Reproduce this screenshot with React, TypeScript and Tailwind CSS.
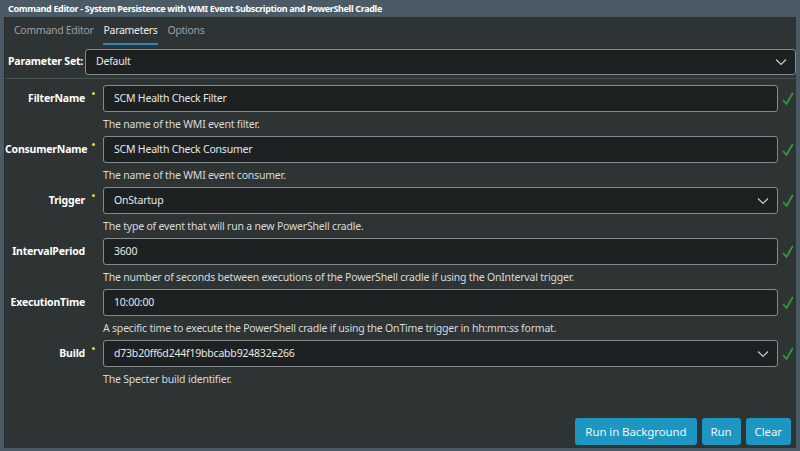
import React from "react";

const font = { fontFamily: '"Noto Sans", "Open Sans", sans-serif' };

function Check() {
  return (
    <svg width="12" height="14" viewBox="0 0 12 14" className="shrink-0">
      <path d="M1.5 8.5 L4.5 12 L10.5 1.5" fill="none" stroke="#2f9a3b" strokeWidth="1.8" strokeLinecap="round" strokeLinejoin="round" />
    </svg>
  );
}

function Chevron() {
  return (
    <svg width="12" height="8" viewBox="0 0 12 8">
      <path d="M1 1.5 L6 6.5 L11 1.5" fill="none" stroke="#c8cbcc" strokeWidth="1.2" />
    </svg>
  );
}

type Row = { label: string; req: boolean; value: string; select?: boolean; desc: string };

const rows: Row[] = [
  { label: "FilterName", req: true, value: "SCM Health Check Filter", desc: "The name of the WMI event filter." },
  { label: "ConsumerName", req: true, value: "SCM Health Check Consumer", desc: "The name of the WMI event consumer." },
  { label: "Trigger", req: true, value: "OnStartup", select: true, desc: "The type of event that will run a new PowerShell cradle." },
  { label: "IntervalPeriod", req: false, value: "3600", desc: "The number of seconds between executions of the PowerShell cradle if using the OnInterval trigger." },
  { label: "ExecutionTime", req: false, value: "10:00:00", desc: "A specific time to execute the PowerShell cradle if using the OnTime trigger in hh:mm:ss format." },
  { label: "Build", req: true, value: "d73b20ff6d244f19bbcabb924832e266", select: true, desc: "The Specter build identifier." },
];

export default function App() {
  return (
    <div className="w-[800px] h-[451px] bg-[#4a5b66] flex flex-col text-[10.5px] tracking-[-0.2px] text-[#e6e8e8] overflow-hidden" style={font}>
      <div className="h-[17px] pl-[8px] flex items-center font-bold text-[9px] tracking-[-0.35px] text-white whitespace-nowrap">
        Command Editor - System Persistence with WMI Event Subscription and PowerShell Cradle
      </div>
      <div className="flex-1 ml-[4px] mr-[4px] mb-[3px] bg-[#2e3334] flex flex-col border-l border-[#262b2c]">
        <div className="h-[28px] flex items-end gap-[10px] pl-[9px] tracking-[-0.3px]">
          <div className="pb-[6px] text-[#9aa0a2]">Command Editor</div>
          <div className="pb-[4px] text-[#eceeee] border-b-2 border-[#2a86c0]">Parameters</div>
          <div className="pb-[6px] text-[#9aa0a2]">Options</div>
        </div>
        <div className="h-[33px] flex items-center pl-[3px]">
          <div className="font-bold text-white w-[77px] whitespace-nowrap">Parameter Set:</div>
          <div className="flex-1 h-[26px] bg-[#1d2121] border border-[#858b8c] rounded-[3px] flex items-center justify-between pl-[10px] pr-[8px]">
            <span className="text-[#e6e8e8]">Default</span>
            <Chevron />
          </div>
        </div>
        <div className="flex-1 flex flex-col border-t border-[#485052]">
          <div className="flex flex-col pt-[6px]">
            {rows.map((r) => (
              <div key={r.label} className="flex flex-col">
                <div className="flex items-center h-[27px]">
                  <div className="w-[80px] text-right font-bold text-white whitespace-nowrap">{r.label}</div>
                  <div className="w-[18px] h-full flex items-start pl-[7px] pt-[7px]">
                    {r.req && <div className="w-[3px] h-[3px] rounded-full bg-[#e2e03a]" />}
                  </div>
                  <div className="w-[675px] h-[27px] bg-[#1d2121] border border-[#858b8c] rounded-[3px] flex items-center justify-between pl-[10px] pr-[8px]">
                    <span>{r.value}</span>
                    {r.select && <Chevron />}
                  </div>
                  <div className="ml-[4px]">
                    <Check />
                  </div>
                </div>
                <div className="h-[24px] pl-[98px] pt-[2px] flex items-center text-[#d8dada] whitespace-nowrap">{r.desc}</div>
              </div>
            ))}
          </div>
          <div className="flex-1" />
          <div className="flex justify-end gap-[5px] pr-[5px] pb-[3px] text-[11.5px] tracking-[-0.1px]">
            <div className="h-[27px] px-[10px] bg-[#1d96c2] rounded-[3px] flex items-center text-[#eef6fa]">Run in Background</div>
            <div className="h-[27px] px-[9px] bg-[#1d96c2] rounded-[3px] flex items-center text-[#eef6fa]">Run</div>
            <div className="h-[27px] px-[9px] bg-[#1d96c2] rounded-[3px] flex items-center text-[#eef6fa]">Clear</div>
          </div>
        </div>
      </div>
    </div>
  );
}
